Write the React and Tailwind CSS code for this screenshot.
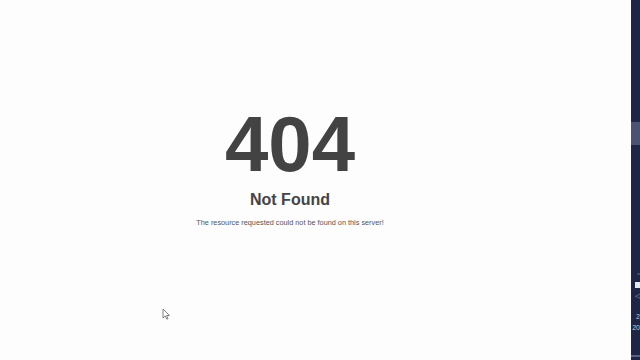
import React from 'react';

const Cursor = () => (
  <svg className="absolute left-[162px] top-[308px]" width="9" height="12" viewBox="0 0 9 12">
    <path d="M1 1 L1 10 L3.2 8 L4.8 11.2 L6 10.6 L4.5 7.5 L7.5 7.5 Z" fill="#fff" stroke="#666" strokeWidth="0.8" strokeLinejoin="round" />
  </svg>
);

const TaskbarStrip = () => (
  <div className="w-[9px] h-full bg-[#1d2745] flex flex-col shrink-0">
    <div className="h-[122px]" />
    <div className="h-[23px] bg-[#4a5472]" />
    <div className="flex-1" />
    <div className="flex flex-col items-end gap-[4px] text-[#c9cedb] text-[7px] leading-none" style={{ fontFamily: '"Liberation Sans", Arial, sans-serif' }}>
      <span className="text-[6px] text-[#8e96ab]">^</span>
      <div className="w-[5px] h-[6px] bg-[#e6e8ee]" />
      <span className="text-[7px] text-[#aeb4c4]">◁</span>
      <div className="h-[6px]" />
      <span className="text-[#c2c7d4]">2</span>
      <span className="text-[#c2c7d4]">20</span>
    </div>
    <div className="h-[24px]" />
    <div className="h-[2px] bg-[#59627c]" />
    <div className="h-[3px]" />
  </div>
);

export default function App() {
  return (
    <div className="w-[640px] h-[360px] flex overflow-hidden bg-[#fdfdfd]">
      <main className="relative flex-1 h-full bg-[#fdfdfd] antialiased" style={{ fontFamily: '"Liberation Sans", Arial, Helvetica, sans-serif' }}>
        <div className="flex flex-col items-center pt-[105px] pr-[51px]">
          <h1 className="text-[78px] leading-none font-bold text-[#434343]">404</h1>
          <h2 className="mt-[9px] text-[16px] leading-none font-bold text-[#444444]">Not Found</h2>
          <p className="mt-[11px] text-[7.3px] leading-none text-[#555555]">The resource requested could not be found on this server!</p>
        </div>
        <Cursor />
      </main>
      <TaskbarStrip />
    </div>
  );
}
